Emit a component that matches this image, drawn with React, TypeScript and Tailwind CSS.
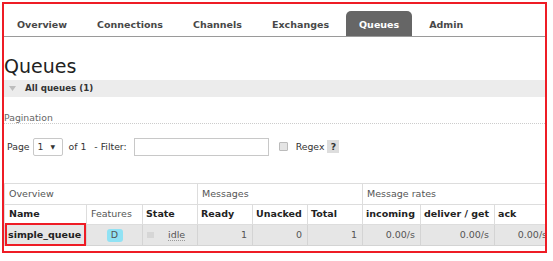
import React from "react";

const tabs = ["Overview", "Connections", "Channels", "Exchanges", "Queues", "Admin"];

export default function App() {
  return (
    <div className="w-[553px] h-[261px] bg-white overflow-hidden font-['DejaVu_Sans',sans-serif] text-[#333]">
      <div className="ml-[2px] mt-[2px] w-[545px] h-[251px] border-2 border-[#ee1c25] overflow-hidden">
        {/* nav */}
        <div className="h-[33px] border-b border-[#9a9a9a] flex items-end gap-[4px]">
          {tabs.map((t) => (
            <div
              key={t}
              className={
                t === "Queues"
                  ? "h-[25px] px-[13px] pt-[4px] flex items-center rounded-t-[5px] bg-[#666] text-white font-bold text-[9.5px]"
                  : "h-[25px] px-[13px] pt-[4px] flex items-center font-bold text-[9.5px] text-[#484848]"
              }
            >
              {t}
            </div>
          ))}
        </div>

        <h1 className="mt-[18px] text-[19px] leading-[22px] text-[#222]">Queues</h1>

        <div className="mt-[3px] h-[17px] bg-[#ececec] flex items-center pl-[5px]">
          <svg width="7" height="5" viewBox="0 0 7 5" className="mr-[9px]">
            <polygon points="0,0 7,0 3.5,5" fill="#bdbdbd" />
          </svg>
          <span className="font-bold text-[8.7px] text-[#333]">All queues (1)</span>
        </div>

        <div className="mt-[14px] h-[13px] leading-[13px] text-[9.3px] text-[#666] border-b border-dotted border-[#ccc]">
          Pagination
        </div>

        <div className="mt-[13px] h-[19px] flex items-center text-[9.3px] text-[#333] pl-[3px]">
          <span>Page</span>
          <div className="ml-[3px] w-[30px] h-[18px] border border-[#c8c8c8] rounded-[2px] flex items-center pl-[4px] gap-[7px]">
            <span>1</span>
            <span className="text-[6px]">▼</span>
          </div>
          <span className="ml-[6px]">of 1</span>
          <span className="ml-[8px]">- Filter:</span>
          <div className="ml-[7px] w-[135px] h-[18px] border border-[#c8c8c8]" />
          <div className="ml-[10px] w-[9px] h-[9px] border border-[#bbb] bg-[#e4e4e4] rounded-[1px]" />
          <span className="ml-[8px]">Regex</span>
          <span className="ml-[3px] w-[12px] h-[13px] bg-[#ddd] flex items-center justify-center font-bold text-[#333]">?</span>
        </div>

        <table className="mt-[27px] table-fixed border-collapse w-[548px] text-[9.5px]">
          <colgroup>
            <col className="w-[82px]" />
            <col className="w-[56px]" />
            <col className="w-[55px]" />
            <col className="w-[55px]" />
            <col className="w-[55px]" />
            <col className="w-[55px]" />
            <col className="w-[58px]" />
            <col className="w-[74px]" />
            <col className="w-[58px]" />
          </colgroup>
          <thead>
            <tr className="h-[21px] text-[#555]">
              <th colSpan={3} className="border border-[#ddd] text-left font-normal pl-[4px]">Overview</th>
              <th colSpan={3} className="border border-[#ddd] text-left font-normal pl-[4px]">Messages</th>
              <th colSpan={3} className="border border-[#ddd] text-left font-normal pl-[4px]">Message rates</th>
            </tr>
            <tr className="h-[20px] text-[#222]">
              <th className="border border-[#ddd] text-left font-bold pl-[4px]">Name</th>
              <th className="border border-[#ddd] text-left font-normal text-[#555] pl-[4px]">Features</th>
              <th className="border border-[#ddd] text-left font-bold pl-[3px]">State</th>
              <th className="border border-[#ddd] text-left font-bold pl-[3px]">Ready</th>
              <th className="border border-[#ddd] text-left font-bold pl-[3px]">Unacked</th>
              <th className="border border-[#ddd] text-left font-bold pl-[3px]">Total</th>
              <th className="border border-[#ddd] text-left font-bold pl-[3px]">incoming</th>
              <th className="border border-[#ddd] text-left font-bold pl-[3px]">deliver / get</th>
              <th className="border border-[#ddd] text-left font-bold pl-[3px]">ack</th>
            </tr>
          </thead>
          <tbody>
            <tr className="h-[21px] bg-[#e6e6e6] text-[#555]">
              <td className="relative border border-[#d4d4d4] pl-[3px] font-bold text-[#222]">
                simple_queue
                <div className="absolute -top-[2px] left-0 right-0 -bottom-[1px] border-2 border-[#ee1c25]" />
              </td>
              <td className="border border-[#d4d4d4] text-center">
                <span className="inline-flex items-center justify-center w-[16px] h-[13px] rounded-[3px] bg-[#90e2f4] text-[#555]">D</span>
              </td>
              <td className="border border-[#d4d4d4] pl-[4px]">
                <div className="flex items-center">
                  <span className="w-[7px] h-[6px] bg-[#d6d6d6]" />
                  <span className="ml-[14px] border-b border-dotted border-[#999] leading-[11px]">idle</span>
                </div>
              </td>
              <td className="border border-[#d4d4d4] text-right pr-[5px]">1</td>
              <td className="border border-[#d4d4d4] text-right pr-[5px]">0</td>
              <td className="border border-[#d4d4d4] text-right pr-[5px]">1</td>
              <td className="border border-[#d4d4d4] text-right pr-[5px]">0.00/s</td>
              <td className="border border-[#d4d4d4] text-right pr-[5px]">0.00/s</td>
              <td className="border border-[#d4d4d4] text-right pr-[5px]">0.00/s</td>
            </tr>
          </tbody>
        </table>
      </div>
    </div>
  );
}
